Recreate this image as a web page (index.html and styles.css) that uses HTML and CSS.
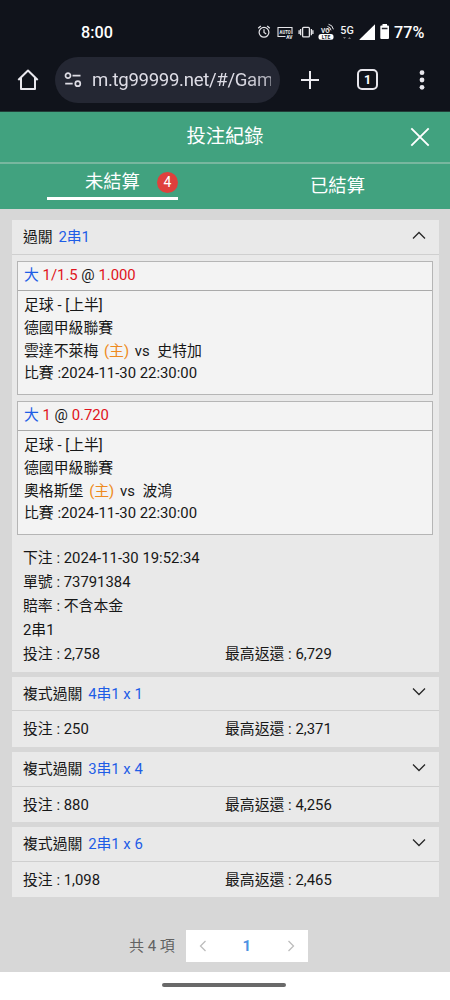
FILE: index.html
```html
<!DOCTYPE html>
<html lang="zh-Hant">
<head>
<meta charset="utf-8">
<meta name="viewport" content="width=device-width, initial-scale=1">
<title>投注紀錄</title>
<link rel="stylesheet" href="styles.css">
</head>
<body>
<div class="chrome">
  <div class="status">
    <span class="clock">8:00</span>
    <svg class="status-icons" width="134" height="20" viewBox="0 0 134 20" fill="none" stroke="#e6e6ea">
      <g stroke-width="1.2"><circle cx="7" cy="10.3" r="4.9"/><path d="M7 7.3v3.2l2.2 1.6M1.2 6.3l2.6-2.3M12.800 6.3l-2.600-2.300"/></g>
      <path stroke-width="1.1" d="M28.500 14.500h-7.500v-9h14v6.500"/>
      <text class="tiny" x="22.600" y="11.800" textLength="11" lengthAdjust="spacingAndGlyphs">AUTO</text>
      <text class="tiny" x="29.300" y="16.700" textLength="6.200" lengthAdjust="spacingAndGlyphs">AV</text>
      <g stroke-width="1.300"><rect x="45.600" y="5.300" width="6.800" height="9.600" rx="1"/><path d="M43.600 7v6.200M54.400 7v6.200M42.100 8.300v3.600M55.900 8.300v3.600"/></g>
      <text class="vo" x="64" y="10.700">VO</text>
      <path stroke-width="1" d="M70.500 4.500q3 .4 3.500 3.800M71.500 2.300q4 .5 4.900 5M69.900 6.700q1.500.2 1.900 2"/>
      <rect x="61.500" y="12" width="15" height="5.700" rx="2.500" fill="#fff" stroke="none"/>
      <text class="lte" x="64.800" y="16.800" textLength="8.500">LTE</text>
      <text class="five" x="83.300" y="11.800" textLength="13.500" lengthAdjust="spacingAndGlyphs">5G</text>
      <path stroke="none" fill="#75757b" d="M86 15h3l-1.500 2zM91 17h3l-1.500-2z"/>
      <path stroke="none" fill="#fff" d="M102.500 18v-.5L118 2.300V18z"/>
      <path stroke="none" fill="#fff" d="M125.500 2h4.500v1.500h1q1 0 1 1V16q0 1-1 1h-6.700q-1 0-1-1V4.500q0-1 1-1h1.200z"/>
      <path stroke="#25262e" stroke-width="1.500" d="M124.800 6.500h5.700"/>
    </svg>
    <span class="battery">77%</span>
  </div>
  <div class="toolbar">
    <svg class="home" width="22" height="22" viewBox="0 0 22 22" fill="none" stroke="#e9e8ee" stroke-width="2" stroke-linejoin="round"><path d="M1.300 11 11 1.500 20.700 11M4 9v11h14V9"/></svg>
    <div class="address">
      <svg width="18" height="16" viewBox="0 0 18 16" fill="none" stroke="#dedde5" stroke-width="1.700"><circle cx="4" cy="3.700" r="2.500"/><path d="M8.500 3.700h8M1.200 11.700h7.500"/><circle cx="13.800" cy="11.700" r="2.500"/></svg>
      <span class="url">m.tg99999.net/#/Gam</span>
    </div>
    <svg class="plus" width="20" height="20" viewBox="0 0 20 20" stroke="#ecebf0" stroke-width="2"><path d="M10 1v18M1 10h18"/></svg>
    <span class="count">1</span>
    <svg class="dots" width="6" height="20" viewBox="0 0 6 20" fill="#e8e7ed"><circle cx="3" cy="2.700" r="2.400"/><circle cx="3" cy="10" r="2.400"/><circle cx="3" cy="17.300" r="2.400"/></svg>
  </div>
</div>
<header class="title">
  <h1>投注紀錄</h1>
  <svg class="close" width="20" height="20" viewBox="0 0 20 20" stroke="#fff" stroke-width="1.900"><path d="m1.300 1.300 17.400 17.400M18.700 1.300 1.300 18.700"/></svg>
</header>
<nav class="tabs">
  <div class="tab"><div class="active"><span>未結算</span><b class="badge">4</b></div></div>
  <div class="tab settled">已結算</div>
</nav>
<main>
  <section class="card first">
    <div class="card-head"><span>過關 <em>2串1</em></span><svg class="arrow" width="14" height="9" viewBox="0 0 14 9"><path d="m1 7.500 6-6 6 6"/></svg></div>
    <div class="legs">
      <article class="leg">
        <div class="odds"><em>大</em> <i>1/1.5</i> @ <i>1.000</i></div>
        <div class="match"><p>足球 - [上半]</p><p>德國甲級聯賽</p><p>雲達不萊梅 <span class="host">(主)</span> <span class="vs">vs</span> 史特加</p><p>比賽 :2024-11-30 22:30:00</p></div>
      </article>
      <article class="leg">
        <div class="odds"><em>大</em> <i>1</i> @ <i>0.720</i></div>
        <div class="match"><p>足球 - [上半]</p><p>德國甲級聯賽</p><p>奧格斯堡 <span class="host">(主)</span> <span class="vs">vs</span> 波鴻</p><p>比賽 :2024-11-30 22:30:00</p></div>
      </article>
    </div>
    <div class="details">
      <p>下注 : 2024-11-30 19:52:34</p><p>單號 : 73791384</p><p>賠率 : 不含本金</p><p>2串1</p>
      <div class="amounts"><span>投注 : 2,758</span><span>最高返還 : 6,729</span></div>
    </div>
  </section>
  <section class="card">
    <div class="card-head"><span>複式過關 <em>4串1 x 1</em></span><svg class="arrow" width="14" height="9" viewBox="0 0 14 9"><path d="m1 1.500 6 6 6-6"/></svg></div>
    <div class="amounts"><span>投注 : 250</span><span>最高返還 : 2,371</span></div>
  </section>
  <section class="card">
    <div class="card-head"><span>複式過關 <em>3串1 x 4</em></span><svg class="arrow" width="14" height="9" viewBox="0 0 14 9"><path d="m1 1.500 6 6 6-6"/></svg></div>
    <div class="amounts"><span>投注 : 880</span><span>最高返還 : 4,256</span></div>
  </section>
  <section class="card">
    <div class="card-head"><span>複式過關 <em>2串1 x 6</em></span><svg class="arrow" width="14" height="9" viewBox="0 0 14 9"><path d="m1 1.500 6 6 6-6"/></svg></div>
    <div class="amounts"><span>投注 : 1,098</span><span>最高返還 : 2,465</span></div>
  </section>
  <div class="pagination">
    <span>共 4 項</span>
    <div class="pager">
      <svg width="8" height="12" viewBox="0 0 8 12"><path d="M6.500 1 1.500 6l5 5"/></svg>
      <b>1</b>
      <svg width="8" height="12" viewBox="0 0 8 12"><path d="m1.500 1 5 5-5 5"/></svg>
    </div>
  </div>
</main>
<footer><div class="handle"></div></footer>
</body>
</html>
```
FILE: styles.css
```css
* { box-sizing: border-box; }
body { margin: 0; width: 450px; height: 1000px; overflow: hidden; background: #d7d7d7; color: #171717; font: 14.870px/22.800px Roboto, "Noto Sans CJK TC", sans-serif; }
p, h1 { margin: 0; }
em, i { font-style: normal; }
em { color: #1e5de6; }
i { color: #e01420; }
.chrome { height: 112px; background: #10131b; border-bottom: 1px solid #223d38; color: #fff; }
.status { height: 56px; padding: 22px 0 0 81px; display: flex; line-height: 22px; }
.clock { width: 176px; font-size: 16.200px; font-weight: 500; }
.status-icons { flex: none; }
.tiny, .vo, .lte, .five { font-family: Roboto, sans-serif; fill: #f2f2f4; stroke: none; }
.tiny { font-size: 4.500px; font-weight: 700; }
.vo { font-size: 6.500px; font-weight: 700; }
.lte { font-size: 5px; font-weight: 700; fill: #20232b; }
.five { font-size: 10.500px; font-weight: 500; }
.battery { margin-left: 3px; font-size: 16.200px; font-weight: 500; }
.toolbar { height: 47px; padding-left: 17px; display: flex; align-items: center; }
.home { flex: none; margin-right: 16px; }
.address { flex: none; width: 225px; height: 46px; padding: 0 9px; border-radius: 23px; background: #242733; display: flex; align-items: center; }
.address svg { flex: none; margin-right: 10px; }
.url { width: 179px; overflow: hidden; white-space: nowrap; font-size: 18.600px; letter-spacing: -.32px; line-height: 28px; color: #dedde6; -webkit-mask-image: linear-gradient(90deg, #000 82%, rgba(0,0,0,.7)); mask-image: linear-gradient(90deg, #000 82%, rgba(0,0,0,.7)); }
.plus { flex: none; margin-left: 20px; }
.count { width: 21px; height: 21px; margin-left: 37px; border: 2px solid #e7e6ec; border-radius: 5px; font-size: 12.500px; font-weight: 700; line-height: 17px; text-align: center; }
.dots { margin-left: 41px; }
.title { height: 52px; border-bottom: 2px solid #78b79f; background: #41a27f; color: #fff; display: grid; grid-template-columns: 1fr auto 1fr; align-items: center; padding-bottom: 1px; }
.title h1 { grid-column: 2; font-size: 19.300px; line-height: 28px; font-weight: 400; }
.close { justify-self: end; margin-right: 20px; }
.tabs { height: 45px; background: #41a27f; color: #fff; display: grid; grid-template-columns: 1fr 1fr; font-size: 18.300px; }
.tab { display: flex; justify-content: center; }
.active { width: 131px; height: 36px; border-bottom: 3px solid #fff; display: flex; align-items: center; padding: 3px 0 0 38px; gap: 17px; line-height: 30px; }
.badge { width: 21px; height: 21px; background: #df403c; border-radius: 50%; font-size: 14px; line-height: 21px; font-weight: 400; text-align: center; }
.settled { line-height: 44px; }
main { height: 763px; padding: 11px 11px 0 12px; }
.card { height: 70px; margin-bottom: 5.300px; background: #e9e9e9; }
.first { height: 451.500px; }
.card-head { height: 34.500px; padding: 1.500px 13px 0 11px; border-bottom: 1px solid #cfcfcf; display: flex; align-items: center; justify-content: space-between; }
.card-head em { margin-left: 2px; }
.arrow { margin-bottom: 5px; fill: none; stroke: #272727; stroke-width: 1.300; }
.legs { padding: 6px 6px 0 5px; display: grid; gap: 6px; }
.leg { height: 134px; background: #f3f3f3; border: 1px solid #b5b5b5; }
.odds { height: 29.500px; padding: 1px 6px; border-bottom: 1px solid #aaa; line-height: 24px; }
.match { padding: 3px 6px; }
.host { margin: 0 2px; color: #ee8a20; }
.vs { margin-right: 4px; }
.details { padding: 11px 11px 0; line-height: 24px; }
.amounts { display: grid; grid-template-columns: 202px 1fr; padding: 0 11px; line-height: 36.500px; }
.details .amounts { padding: 0; line-height: 24px; }
.pagination { display: flex; align-items: center; margin: 33px 0 0 117px; color: #626262; font-size: 15px; }
.pager { width: 122px; height: 32px; margin-left: 11px; padding: 0 13px; background: #fff; display: flex; align-items: center; justify-content: space-between; }
.pager svg { fill: none; stroke: #bdbdbd; stroke-width: 1.300; }
.pager b { color: #4d91e2; }
footer { height: 28px; background: #fff; display: flex; justify-content: center; padding: 11px 3px 0 0; }
.handle { width: 124px; height: 4px; border-radius: 2px; background: #696969; }
```
